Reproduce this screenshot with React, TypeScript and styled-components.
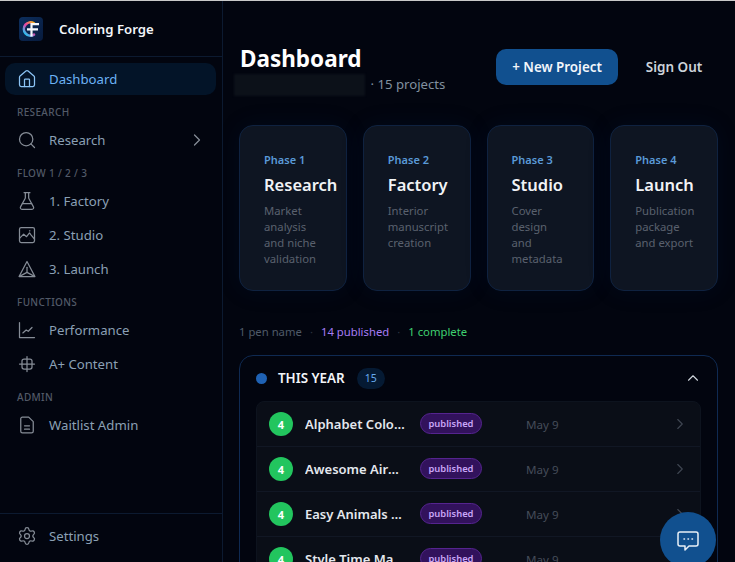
import React from 'react';
import styled, { createGlobalStyle } from 'styled-components';
import { House, Search, ChevronRight, ChevronUp, FlaskConical, Settings } from 'lucide-react';

const Global = createGlobalStyle`
  html, body { margin: 0; padding: 0; height: 100%; background: #02050f; overflow: hidden; }
  * { box-sizing: border-box; }
  #root { height: 100%; }
  body { font-family: "Noto Sans", "Open Sans", sans-serif; }
`;

const Shell = styled.div`
  display: flex;
  height: 100vh;
  overflow: hidden;
  border-top: 1px solid #c9c9c9;
  background: #02050f;
`;
const Sidebar = styled.aside`
  width: 223px;
  flex: none;
  display: flex;
  flex-direction: column;
  background: #02050f;
  border-right: 1px solid #0c1a30;
`;
const Brand = styled.div`
  height: 56px;
  flex: none;
  display: flex;
  align-items: center;
  gap: 16px;
  padding: 0 19px;
  border-bottom: 1px solid #0c1a30;
  color: #f3f6fa;
  font-size: 13.2px;
  font-weight: 600;
`;
const Nav = styled.nav`
  flex: 1;
  padding: 6px 6px 0 5px;
`;
const NavItem = styled.div<{ $active?: boolean }>`
  height: 32px;
  margin-bottom: 2px;
  padding: 0 12px;
  display: flex;
  align-items: center;
  gap: 12px;
  border-radius: 10px;
  font-size: 13.2px;
  color: ${p => (p.$active ? '#6cb2f5' : '#8ba0b5')};
  background: ${p => (p.$active ? '#031428' : 'transparent')};
  svg { flex: none; color: ${p => (p.$active ? '#8cc4f5' : '#868d97')}; }
`;
const NavChevron = styled(ChevronRight)`
  margin-right: -3px;
`;
const Spacer = styled.span`
  flex: 1;
`;
const NavLabel = styled.div`
  height: 27px;
  padding: 8px 12px 0;
  font-size: 10px;
  line-height: 14px;
  font-weight: 500;
  letter-spacing: 0.35px;
  color: #525a68;
`;
const SideFooter = styled.div`
  height: 49px;
  flex: none;
  padding: 6px 5px 0;
  border-top: 1px solid #0c1a30;
`;
const Main = styled.main`
  flex: 1;
  min-width: 0;
  padding: 43px 17px 0 16px;
  overflow: hidden;
  background: #02050f;
`;
const Header = styled.header`
  display: flex;
  justify-content: space-between;
  align-items: flex-start;
`;
const Title = styled.h1`
  margin: 0;
  font-size: 22.5px;
  line-height: 30px;
  font-weight: 700;
  color: #fff;
  padding-left: 1px;
`;
const Sub = styled.div`
  display: flex;
  align-items: center;
  height: 24px;
  margin-top: -2px;
  font-size: 13.2px;
  color: #81909f;
  white-space: pre;
`;
const Redacted = styled.span`
  display: block;
  width: 131px;
  height: 22px;
  margin: 2px 2px 0 -5px;
  background: #0c1119;
  filter: blur(1px);
`;
const Actions = styled.div`
  display: flex;
  align-items: center;
  gap: 12px;
  margin-top: 5px;
`;
const Primary = styled.button`
  width: 122px;
  height: 36px;
  border: 0;
  border-radius: 10px;
  background: #11508f;
  color: #f2f6fb;
  font: 600 13.4px "Noto Sans", sans-serif;
`;
const Ghost = styled.button`
  width: 88px;
  height: 36px;
  border: 0;
  background: transparent;
  color: #ccd3da;
  font: 600 13.5px "Noto Sans", sans-serif;
`;
const Phases = styled.section`
  display: grid;
  grid-template-columns: repeat(4, minmax(0, 1fr));
  gap: 16px;
  margin-top: 29px;
`;
const PhaseCard = styled.article`
  height: 166px;
  padding: 24px;
  border: 1px solid #0f2240;
  border-radius: 14px;
  background: #0e1522;
  box-shadow: 0 0 24px rgba(16, 50, 110, 0.12);
`;
const PhaseTag = styled.div`
  font-size: 11px;
  line-height: 20px;
  font-weight: 600;
  color: #5a9ad8;
`;
const PhaseName = styled.h3`
  margin: 1px 0 0;
  font-size: 16.5px;
  line-height: 28px;
  font-weight: 600;
  color: #f1f3f6;
`;
const PhaseDesc = styled.p`
  margin: 4px 0 0;
  font-size: 11.3px;
  line-height: 16px;
  color: #5a616e;
  white-space: pre;
`;
const Stats = styled.div`
  display: flex;
  gap: 8px;
  margin-top: 32px;
  font-size: 11.3px;
  line-height: 18px;
`;
const Stat = styled.span<{ $color: string }>`
  color: ${p => p.$color};
`;
const Group = styled.section`
  margin-top: 14px;
  padding: 0 16px;
  border: 1px solid #0f2a52;
  border-radius: 14px;
  background: #02050f;
`;
const GroupHead = styled.div`
  height: 45px;
  padding-bottom: 1px;
  display: flex;
  align-items: center;
  color: #cfd5dc;
  svg { margin-right: -1px; }
`;
const Dot = styled.span`
  width: 11px;
  height: 11px;
  border-radius: 50%;
  background: #1f62b4;
  margin-right: 11px;
`;
const GroupName = styled.span`
  font-size: 13.4px;
  font-weight: 600;
  color: #f2f5f9;
`;
const Count = styled.span`
  margin-left: 12px;
  width: 28px;
  height: 21px;
  display: flex;
  align-items: center;
  justify-content: center;
  border-radius: 11px;
  background: #051a33;
  color: #67aaee;
  font-size: 10.5px;
`;
const List = styled.div`
  border: 1px solid #0d131e;
  border-radius: 8px;
  background: #0a0e17;
`;
const Row = styled.div`
  height: 45px;
  display: flex;
  align-items: center;
  padding: 0 12px;
  border-bottom: 1px solid #111724;
  color: #3f4652;
  svg { margin-right: -1px; }
`;
const Score = styled.span`
  width: 24px;
  height: 24px;
  flex: none;
  display: flex;
  align-items: center;
  justify-content: center;
  border-radius: 50%;
  background: #22c55e;
  color: #fff;
  font-size: 11px;
  font-weight: 700;
`;
const RowTitle = styled.span`
  width: 101.5px;
  flex: none;
  margin-left: 12px;
  overflow: hidden;
  white-space: nowrap;
  text-overflow: ellipsis;
  font-size: 13px;
  font-weight: 600;
  color: #e4e8ee;
`;
const Pill = styled.span`
  width: 62px;
  height: 21px;
  flex: none;
  margin: -1px 0 0 13.5px;
  display: flex;
  align-items: center;
  justify-content: center;
  border: 1px solid #55248f;
  border-radius: 11px;
  background: #32125c;
  color: #c9a6f7;
  font-size: 9.4px;
  font-weight: 600;
`;
const RowDate = styled.span`
  margin-left: 44px;
  font-size: 11.6px;
  color: #454c59;
`;
const Fab = styled.button`
  position: fixed;
  left: 660px;
  top: 512px;
  width: 56px;
  height: 56px;
  padding: 0;
  border: 0;
  border-radius: 50%;
  background: #11508f;
  color: #e8eff7;
  display: flex;
  align-items: center;
  justify-content: center;
`;

const Logo = () => (
  <svg width="24" height="24" viewBox="0 0 24 24" fill="none" aria-hidden="true">
    <defs>
      <linearGradient id="tile" x1="0" y1="0" x2="1" y2="1">
        <stop offset="0" stopColor="#0d2f5e" />
        <stop offset="1" stopColor="#071a3c" />
      </linearGradient>
      <linearGradient id="ring" x1="1" y1="0" x2="0.3" y2="1">
        <stop offset="0" stopColor="#f7b21e" />
        <stop offset="0.5" stopColor="#ee3fa6" />
        <stop offset="1" stopColor="#2bc0f0" />
      </linearGradient>
    </defs>
    <rect width="24" height="24" rx="4" fill="url(#tile)" />
    <path d="M15 6.4A6.6 6.6 0 1 0 15 17.6" stroke="url(#ring)" strokeWidth="2.6" strokeLinecap="round" />
    <path d="M12.5 19.5V7.2h7.5M8 12.4h11" stroke="#f4f7fb" strokeWidth="2.2" />
  </svg>
);

const Stroke = ({ children }: { children: React.ReactNode }) => (
  <svg width="20" height="20" viewBox="0 0 24 24" fill="none" stroke="currentColor" strokeWidth="1.5" strokeLinecap="round" strokeLinejoin="round" aria-hidden="true">
    {children}
  </svg>
);

const StudioIcon = () => (
  <Stroke>
    <rect x="3" y="3" width="18" height="18" rx="2" />
    <path d="M3 16l5-5 3.5 3 3.5-4.5 1.5 2L21 17" />
    <path d="M15 7h.5" />
  </Stroke>
);
const LaunchIcon = () => (
  <Stroke>
    <path d="M12 3 2.5 21h19Z" />
    <path d="M12 10v6" />
    <path d="M3.5 20.5 12 16l8.5 4.5" />
  </Stroke>
);
const ChartIcon = () => (
  <Stroke>
    <path d="M3 3v18h18" />
    <path d="M7 15.5l4-3.5 2.5 1.5L18 9" />
  </Stroke>
);
const GridIcon = () => (
  <Stroke>
    <rect x="6" y="6" width="12" height="12" rx="2.5" />
    <path d="M12 3v18M3 12h18" />
  </Stroke>
);
const DocIcon = () => (
  <Stroke>
    <path d="M14 2.5H6.5a2 2 0 0 0-2 2v15a2 2 0 0 0 2 2h11a2 2 0 0 0 2-2V8Z" />
    <path d="M9 13h6M9 17h6" />
  </Stroke>
);
const ChatIcon = () => (
  <svg width="24" height="24" viewBox="0 0 24 24" fill="none" stroke="currentColor" strokeWidth="1.5" strokeLinecap="round" strokeLinejoin="round" aria-hidden="true">
    <path d="M4 4h16a2 2 0 0 1 2 2v10a2 2 0 0 1-2 2h-7l-4 4v-4H4a2 2 0 0 1-2-2V6a2 2 0 0 1 2-2Z" />
    <path d="M8 11h.5M12 11h.5M16 11h.5" />
  </svg>
);

const phases = [
  { tag: 'Phase 1', name: 'Research', desc: 'Market\nanalysis\nand niche\nvalidation' },
  { tag: 'Phase 2', name: 'Factory', desc: 'Interior\nmanuscript\ncreation' },
  { tag: 'Phase 3', name: 'Studio', desc: 'Cover\ndesign\nand\nmetadata' },
  { tag: 'Phase 4', name: 'Launch', desc: 'Publication\npackage\nand export' },
];

const books = ['Alphabet Coloring Book', 'Awesome Airplanes Coloring', 'Easy Animals Coloring', 'Style Time Magic'];

export default function App() {
  return (
    <Shell>
      <Global />
      <Sidebar>
        <Brand>
          <Logo />
          Coloring Forge
        </Brand>
        <Nav>
          <NavItem $active><House size={20} strokeWidth={1.5} />Dashboard</NavItem>
          <NavLabel>RESEARCH</NavLabel>
          <NavItem>
            <Search size={20} strokeWidth={1.5} />Research<Spacer /><NavChevron size={20} strokeWidth={1.5} />
          </NavItem>
          <NavLabel>FLOW 1 / 2 / 3</NavLabel>
          <NavItem><FlaskConical size={20} strokeWidth={1.5} />1. Factory</NavItem>
          <NavItem><StudioIcon />2. Studio</NavItem>
          <NavItem><LaunchIcon />3. Launch</NavItem>
          <NavLabel>FUNCTIONS</NavLabel>
          <NavItem><ChartIcon />Performance</NavItem>
          <NavItem><GridIcon />A+ Content</NavItem>
          <NavLabel>ADMIN</NavLabel>
          <NavItem><DocIcon />Waitlist Admin</NavItem>
        </Nav>
        <SideFooter>
          <NavItem><Settings size={20} strokeWidth={1.5} />Settings</NavItem>
        </SideFooter>
      </Sidebar>
      <Main>
        <Header>
          <div>
            <Title>Dashboard</Title>
            <Sub><Redacted /> · 15 projects</Sub>
          </div>
          <Actions>
            <Primary>+ New Project</Primary>
            <Ghost>Sign Out</Ghost>
          </Actions>
        </Header>
        <Phases>
          {phases.map(p => (
            <PhaseCard key={p.tag}>
              <PhaseTag>{p.tag}</PhaseTag>
              <PhaseName>{p.name}</PhaseName>
              <PhaseDesc>{p.desc}</PhaseDesc>
            </PhaseCard>
          ))}
        </Phases>
        <Stats>
          <Stat $color="#4f5a68">1 pen name</Stat>
          <Stat $color="#2c3440">·</Stat>
          <Stat $color="#a57cf5">14 published</Stat>
          <Stat $color="#2c3440">·</Stat>
          <Stat $color="#3fd070">1 complete</Stat>
        </Stats>
        <Group>
          <GroupHead>
            <Dot />
            <GroupName>THIS YEAR</GroupName>
            <Count>15</Count>
            <Spacer />
            <ChevronUp size={18} strokeWidth={1.5} />
          </GroupHead>
          <List>
            {books.map(b => (
              <Row key={b}>
                <Score>4</Score>
                <RowTitle>{b}</RowTitle>
                <Pill>published</Pill>
                <RowDate>May 9</RowDate>
                <Spacer />
                <ChevronRight size={18} strokeWidth={1.5} />
              </Row>
            ))}
          </List>
        </Group>
      </Main>
      <Fab aria-label="Chat"><ChatIcon /></Fab>
    </Shell>
  );
}
